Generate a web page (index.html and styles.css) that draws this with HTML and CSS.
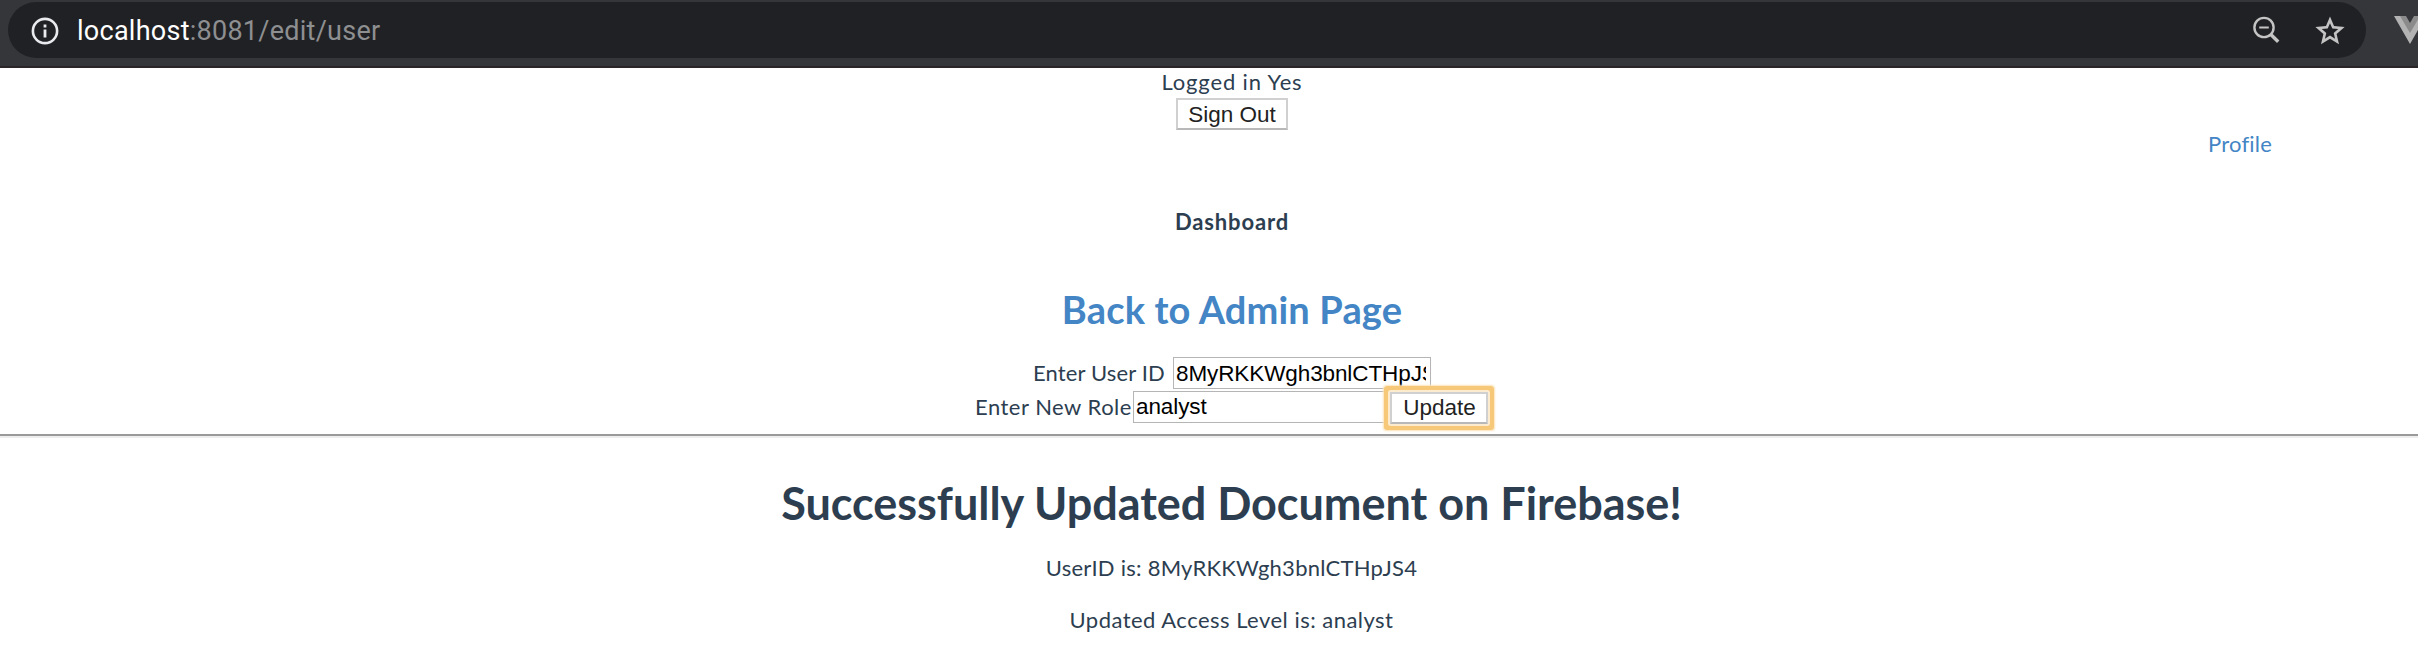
FILE: index.html
```html
<!DOCTYPE html>
<html lang="en">
<head>
<meta charset="utf-8">
<title>Edit user</title>
<link rel="stylesheet" href="styles.css">
</head>
<body>
<header class="toolbar">
  <div class="address">
    <svg class="info" width="28" height="28" viewBox="0 0 28 28"><circle cx="14" cy="14" r="12.1" fill="none" stroke="#e8eaed" stroke-width="2.6"/><path d="M14 12.4v8M14 7.6v2.8" stroke="#e8eaed" stroke-width="2.8"/></svg>
    <div class="url"><span class="host">localhost</span><span class="path">:8081/edit/user</span></div>
    <svg class="magnifier" width="28" height="28" viewBox="0 0 28 28"><circle cx="12" cy="11.5" r="9.6" fill="none" stroke="#c4c4c5" stroke-width="2.4"/><path d="M7.2 11.5h9.6" stroke="#c4c4c5" stroke-width="2"/><path d="M18.6 18.2l7.6 7.6" stroke="#c4c4c5" stroke-width="3.4"/></svg>
    <svg class="star" width="30" height="29" viewBox="0 0 30 29"><path fill="#c4c4c5" fill-rule="evenodd" d="M15 .5l4 9.6 10.6.9-8 7L24 28.300l-9-5.500-9 5.500 2.400-10.300-8-7 10.600-.9zM15 7.200l-2.300 5.400-5.900.5 4.500 3.900-1.400 5.700 5.100-3.100 5.100 3.100-1.400-5.700 4.500-3.900-5.900-.5z"/></svg>
  </div>
  <svg class="vue" width="32" height="28" viewBox="0 0 32 28"><path d="M0 0h7l9 15 9-15h7L16 28z" fill="#b3b3b4"/><path d="M6 0h6l4 7 4-7h6L16 17z" fill="#8b8b8c"/></svg>
</header>
<main class="page">
  <div class="status">Logged in Yes</div>
  <button class="btn signout">Sign Out</button>
  <nav class="nav"><a class="profile">Profile</a></nav>
  <div class="dashboard">Dashboard</div>
  <h2 class="back"><a>Back to Admin Page</a></h2>
  <div class="row row-id"><label class="label-id">Enter User ID</label><input class="field field-id" type="text" value="8MyRKKWgh3bnlCTHpJS4"></div>
  <div class="row row-role"><label class="label-role">Enter New Role</label><input class="field field-role" type="text" value="analyst"><button class="btn update">Update</button></div>
</main>
<hr class="rule">
<section class="result">
  <h1 class="success">Successfully Updated Document on Firebase!</h1>
  <p class="line user-line">UserID is: 8MyRKKWgh3bnlCTHpJS4</p>
  <p class="line level-line">Updated Access Level is: analyst</p>
</section>
</body>
</html>
```
FILE: styles.css
```css
* { box-sizing: border-box; }
body { margin: 0; background: #fff; color: #2c3e50; font: 22px/28px Lato, sans-serif; overflow: hidden; white-space: nowrap; }
.toolbar { height: 68px; background: #35363a; border-bottom: 2px solid #292529; display: flex; align-items: flex-start; padding: 2px 0 0 8px; overflow: hidden; }
.address { width: 2358px; height: 56px; flex: none; border-radius: 28px; background: #202124; display: flex; align-items: center; padding: 0 21px 0 22px; }
.url { flex: 1; margin-left: 18px; font: 27px/40px Roboto, sans-serif; letter-spacing: .26px; padding-top: 1px; }
.info { margin-top: 1px; margin-left: 1px; }
.host { color: #fff; }
.path { color: #8e8f91; }
.magnifier { margin-right: 35px; }
.vue { margin: 14px 0 0 28px; flex: none; }
.page, .result { display: flex; flex-direction: column; align-items: center; padding-left: 46px; }
.status { height: 30px; line-height: 27px; letter-spacing: .85px; }
.btn { font: 22.5px/28px "Liberation Sans", Arial, sans-serif; color: #222; background: #fff; border: 2px solid #d0d0d0; border-bottom-color: #b8b8b8; padding: 0; text-align: center; }
.signout { width: 112px; height: 32px; padding-top: 1px; }
.nav { align-self: stretch; display: flex; justify-content: flex-end; padding-right: 146px; letter-spacing: .2px; }
.nav a, .back a { color: #4385c5; }
.dashboard { margin-top: 50px; font-weight: 700; letter-spacing: .85px; }
.back { margin: 50px 0 25px; font-size: 38px; line-height: 46px; font-weight: 700; letter-spacing: .15px; }
.row { display: flex; align-items: center; align-self: flex-start; }
.row-id { height: 32px; margin-left: 987px; }
.row-role { height: 32px; margin: 2px 0 11px 929px; }
.label-id { width: 140px; letter-spacing: .15px; }
.label-role { width: 158px; letter-spacing: .5px; }
.field { height: 32px; border: 1px solid #b5b5b5; outline: 0; border-radius: 0; background: #fff; padding: 2px 4px 0 3px; color: #000; font: 22.5px/26px "Liberation Sans", Arial, sans-serif; }
.field-id { width: 258px; letter-spacing: -.1px; padding-left: 2px; }
.field-role { width: 256px; padding: 0 4px 0 2px; letter-spacing: -.1px; }
.update { width: 98px; height: 32px; margin: 1px 0 0 1px; position: relative; line-height: 26px; padding-left: 1px; border-radius: 1px; box-shadow: 0 0 0 2px #fdebcd, 0 0 0 6px #f6c877, 0 0 2px 7px #fbe3b9; }
.rule { margin: 0; height: 4px; border: 0; border-top: 2px solid #9a9a9a; border-bottom: 2px solid #eee; }
.result { padding-left: 45px; }
.success { margin: 38px 0 24px; font-size: 45px; line-height: 54px; font-weight: 700; letter-spacing: -.03px; }
.line { margin: 0 0 24px; }
.user-line { letter-spacing: .25px; }
.level-line { letter-spacing: .48px; }
```
